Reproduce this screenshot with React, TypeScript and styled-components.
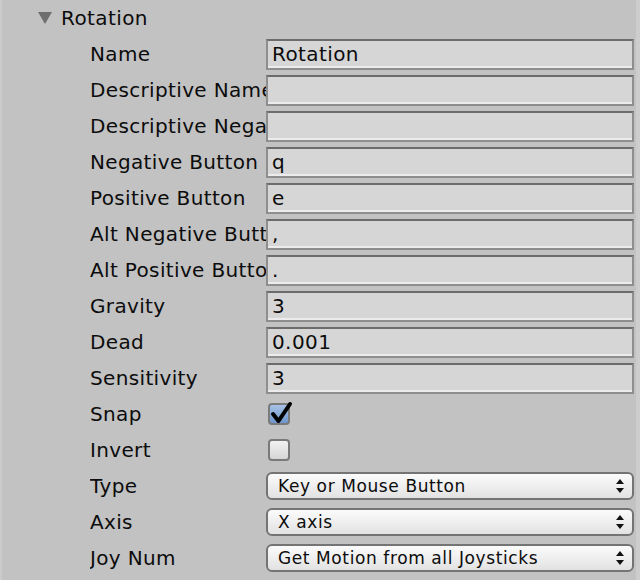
import styled, { createGlobalStyle } from 'styled-components'

const GlobalStyle = createGlobalStyle`
  html, body {
    margin: 0;
    padding: 0;
    background: #c2c2c2;
  }
  body {
    font-family: "DejaVu Sans", "Liberation Sans", sans-serif;
    color: #0c0c0c;
  }
`

const Panel = styled.div`
  width: 640px;
  height: 580px;
  box-sizing: border-box;
  background: #c2c2c2;
  border-left: 2px solid #cbcbcb;
  border-right: 4px solid #cdcdcd;
  overflow: hidden;
`

const Header = styled.div`
  display: flex;
  align-items: center;
  height: 36px;
  padding-left: 36px;
  font-size: 20px;
  letter-spacing: 0.4px;
`

const Triangle = styled.span`
  width: 0;
  height: 0;
  border-left: 7px solid transparent;
  border-right: 7px solid transparent;
  border-top: 12px solid #6e6e6e;
  margin-right: 9px;
`

const Row = styled.div`
  display: grid;
  grid-template-columns: 176px 1fr;
  align-items: center;
  height: 36px;
  padding-left: 88px;
  padding-right: 2px;
`

const Label = styled.div`
  font-size: 20px;
  white-space: nowrap;
  overflow: hidden;
  letter-spacing: 0.35px;
`

const TextField = styled.div`
  height: 31px;
  box-sizing: border-box;
  border: 2px solid #8e8e8e;
  border-top-color: #6c6c6c;
  background: #d6d6d6;
  box-shadow: inset 0 -2px 0 #ececec;
  padding: 0 4px;
  font-size: 20px;
  letter-spacing: 0.4px;
  line-height: 27px;
  white-space: nowrap;
  overflow: hidden;
`

const CheckBox = styled.div<{ checked?: boolean }>`
  width: 22px;
  height: 22px;
  margin-left: 2px;
  box-sizing: border-box;
  border: 2px solid #7a7a7a;
  border-radius: 4px;
  position: relative;
  background: ${(p) =>
    p.checked
      ? 'linear-gradient(#a7c1e6, #6f95cc)'
      : 'linear-gradient(#f2f2f2, #d6d6d6)'};
`

const CheckMark = styled.svg`
  position: absolute;
  left: -1px;
  top: -4px;
  width: 24px;
  height: 24px;
  overflow: visible;
`

const Dropdown = styled.div`
  height: 28px;
  box-sizing: border-box;
  border: 2px solid #747474;
  border-radius: 6px;
  background: linear-gradient(#fbfbfb, #e2e2e2);
  display: flex;
  align-items: center;
  justify-content: space-between;
  padding: 0 8px 0 10px;
  font-size: 17px;
  letter-spacing: 0.6px;
`

const Arrows = styled.svg`
  width: 8px;
  height: 14px;
`

const textRows: [string, string][] = [
  ['Name', 'Rotation'],
  ['Descriptive Name', ''],
  ['Descriptive Negative Name', ''],
  ['Negative Button', 'q'],
  ['Positive Button', 'e'],
  ['Alt Negative Button', ','],
  ['Alt Positive Button', '.'],
  ['Gravity', '3'],
  ['Dead', '0.001'],
  ['Sensitivity', '3'],
]

const dropRows: [string, string][] = [
  ['Type', 'Key or Mouse Button'],
  ['Axis', 'X axis'],
  ['Joy Num', 'Get Motion from all Joysticks'],
]

const App = () => {
  return (
    <>
      <GlobalStyle />
      <Panel>
        <Header>
          <Triangle />
          Rotation
        </Header>
        {textRows.map(([label, value]) => (
          <Row key={label}>
            <Label>{label}</Label>
            <TextField>{value}</TextField>
          </Row>
        ))}
        <Row>
          <Label>Snap</Label>
          <CheckBox checked>
            <CheckMark viewBox="0 0 24 24">
              <path
                d="M4 13 L9.5 20 L21 3"
                fill="none"
                stroke="#000"
                strokeWidth="4"
                strokeLinecap="round"
                strokeLinejoin="round"
              />
            </CheckMark>
          </CheckBox>
        </Row>
        <Row>
          <Label>Invert</Label>
          <CheckBox />
        </Row>
        {dropRows.map(([label, value]) => (
          <Row key={label}>
            <Label>{label}</Label>
            <Dropdown>
              {value}
              <Arrows viewBox="0 0 8 14">
                <path d="M4 0 L8 5 L0 5 Z M4 14 L8 9 L0 9 Z" fill="#111" />
              </Arrows>
            </Dropdown>
          </Row>
        ))}
      </Panel>
    </>
  )
}

export default App
